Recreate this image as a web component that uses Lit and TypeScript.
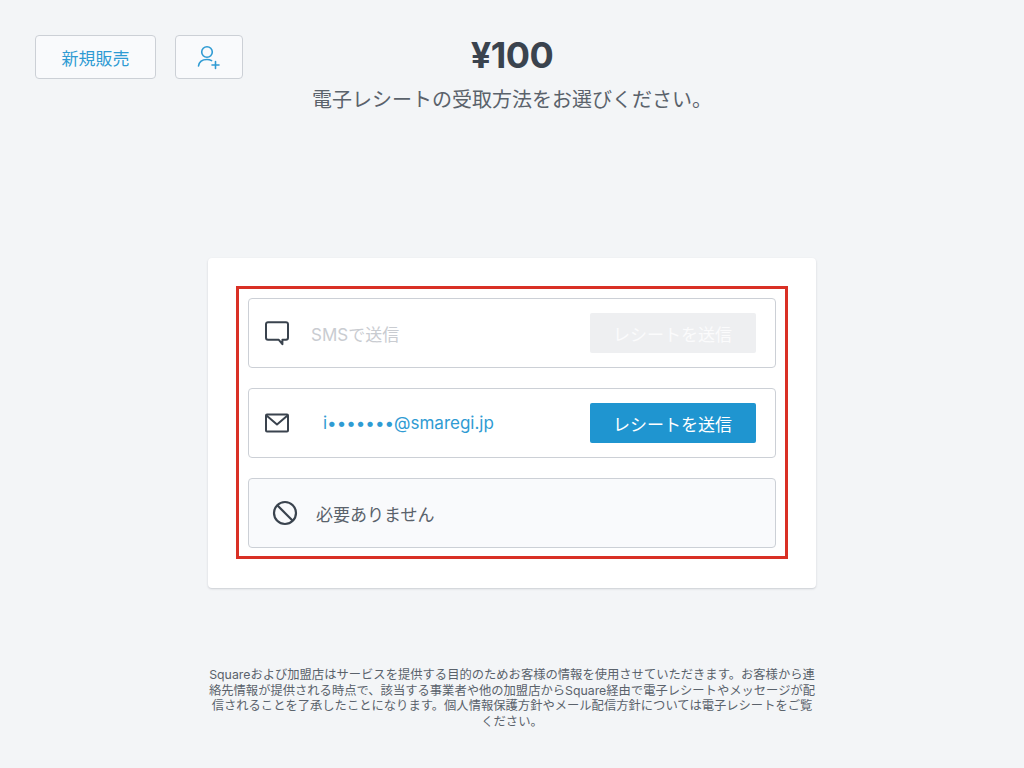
import { LitElement, html, css } from "lit";
import { customElement } from "lit/decorators.js";

const chat = html`<svg width="26" height="26" viewBox="0 0 26 26" fill="none" stroke="#3a434e" stroke-width="2" stroke-linejoin="round"><path d="M4 2.2h18a2 2 0 0 1 2 2v13.6a2 2 0 0 1-2 2h-3.6v4.4l-3.6-4.4H4a2 2 0 0 1-2-2V4.200a2 2 0 0 1 2-2z"/></svg>`;
const mail = html`<svg width="26" height="22" viewBox="0 0 26 22" fill="none" stroke="#3a434e" stroke-width="2" stroke-linejoin="round"><rect x="2" y="2.500" width="22" height="17" rx="1"/><path d="M2.500 3.500 13 12.500 23.500 3.500"/></svg>`;
const ban = html`<svg width="26" height="26" viewBox="0 0 26 26" fill="none" stroke="#3a434e" stroke-width="2.200"><circle cx="13" cy="13" r="11"/><path d="M5.300 5.300 20.700 20.700"/></svg>`;
const person = html`<svg width="24" height="26" viewBox="0 0 24 26" fill="none" stroke="#2f9bd3" stroke-width="1.600" stroke-linecap="round"><circle cx="10" cy="8" r="5.300"/><path d="M1.500 22c.6-4 4-6.500 8.500-6.500 1.700 0 3.300.4 4.600 1.100"/><path d="M18.500 17.500v7M15 21h7"/></svg>`;

@customElement("app-root")
export class AppRoot extends LitElement {
  static styles = css`
    :host { display: block; }
    .page {
      box-sizing: border-box; width: 1024px; height: 768px; background: #f3f5f7;
      font-family: "Inter", "Noto Sans CJK JP", sans-serif; color: #3a434e;
      display: flex; flex-direction: column; align-items: center;
    }
    .head {
      box-sizing: border-box; width: 100%; padding: 35px 35px 0;
      display: grid; grid-template-columns: 1fr auto 1fr; height: 258px;
    }
    .tools { display: flex; gap: 19px; align-items: flex-start; }
    .tool {
      box-sizing: border-box; height: 44px; border: 1.500px solid #ccd0d6; border-radius: 4px;
      background: #f9fafc; color: #2f9bd3; font: inherit; font-size: 17px;
      display: flex; align-items: center; justify-content: center; padding: 0;
    }
    .new { width: 121px; }
    .add { width: 68px; }
    .title { text-align: center; }
    .amount { font-size: 36px; line-height: 42px; font-weight: 700; margin-top: -1px; color: #3a434e; letter-spacing: -0.5px; }
    .sub { font-size: 20px; line-height: 30px; color: #5a626b; margin-top: 9px; white-space: nowrap; }
    .card {
      box-sizing: border-box; width: 608px; height: 330px; background: #fff;
      border-radius: 4px; box-shadow: 0 1px 2px rgba(60,70,80,.22); padding: 28px;
    }
    .frame {
      box-sizing: border-box; width: 552px; height: 273px; border: 3px solid #d93025;
      padding: 9px 9px 8px; display: flex; flex-direction: column; gap: 20px;
    }
    .row {
      box-sizing: border-box; height: 70px; border: 1.500px solid #ccd0d6; border-radius: 4px;
      display: grid; grid-template-columns: 62px 1fr auto; align-items: center; padding: 0 19.500px 0 0;
    }
    .row.none { background: #f9fafc; grid-template-columns: 67px 1fr; }
    .icon { display: flex; justify-content: flex-end; padding-right: 21px; align-items: center; }
    .row.none .icon { padding-right: 18px; }
    .label { font-size: 17px; white-space: nowrap; }
    .off { color: #c9ccd1; padding-left: 0; }
    .addr { color: #2f9bd3; padding-left: 12px; }
    .plain { color: #5a626b; }
    .send {
      box-sizing: border-box; width: 166px; height: 40px; border: 0; border-radius: 2px;
      background: #1f95d0; color: #fff; font: inherit; font-size: 17px; padding: 0;
    }
    .send[disabled] { background: #eeeff1; color: #fbfbfc; }
    .note {
      width: 608px; margin-top: 79px; text-align: center;
      font-size: 12.300px; line-height: 15.500px; color: #5a626b;
    }
  `;

  render() {
    return html`<div class="page">
      <div class="head">
        <div class="tools">
          <button class="tool new">新規販売</button>
          <button class="tool add" aria-label="顧客を追加">${person}</button>
        </div>
        <div class="title">
          <div class="amount">¥100</div>
          <div class="sub">電子レシートの受取方法をお選びください。</div>
        </div>
        <div></div>
      </div>
      <div class="card">
        <div class="frame">
          <div class="row">
            <div class="icon">${chat}</div>
            <div class="label off">SMSで送信</div>
            <button class="send" disabled>レシートを送信</button>
          </div>
          <div class="row">
            <div class="icon">${mail}</div>
            <div class="label addr">i•••••••@smaregi.jp</div>
            <button class="send">レシートを送信</button>
          </div>
          <div class="row none">
            <div class="icon">${ban}</div>
            <div class="label plain">必要ありません</div>
          </div>
        </div>
      </div>
      <div class="note">Squareおよび加盟店はサービスを提供する目的のためお客様の情報を使用させていただきます。お客様から連絡先情報が提供される時点で、該当する事業者や他の加盟店からSquare経由で電子レシートやメッセージが配信されることを了承したことになります。個人情報保護方針やメール配信方針については電子レシートをご覧ください。</div>
    </div>`;
  }
}
